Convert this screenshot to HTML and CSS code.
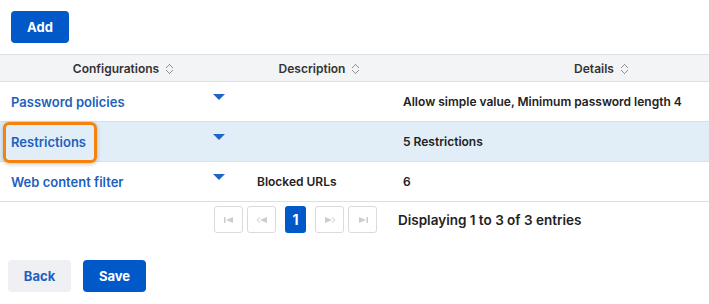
FILE: index.html
```html
<!DOCTYPE html>
<html lang="en">
  <head>
    <meta charset="UTF-8" />
    <title>Configurations</title>
    <link rel="stylesheet" href="styles.css">
  </head>
  <body>
    <div class="toolbar">
      <button class="btn btn-primary">Add</button>
    </div>

    <div class="table-wrap">
      <table class="grid">
        <colgroup>
          <col class="col-config" />
          <col class="col-desc" />
          <col class="col-details" />
        </colgroup>
        <thead>
          <tr>
            <th>Configurations <span class="sort"></span></th>
            <th>Description <span class="sort"></span></th>
            <th>Details <span class="sort"></span></th>
          </tr>
        </thead>
        <tbody>
          <tr>
            <td class="name"><a href="#">Password policies</a><span class="caret"></span></td>
            <td></td>
            <td>Allow simple value, Minimum password length 4</td>
          </tr>
          <tr class="selected">
            <td class="name">
              <a href="#">Restrictions</a><span class="caret"></span>
              <span class="highlight"></span>
            </td>
            <td></td>
            <td>5 Restrictions</td>
          </tr>
          <tr>
            <td class="name"><a href="#">Web content filter</a><span class="caret"></span></td>
            <td>Blocked URLs</td>
            <td>6</td>
          </tr>
        </tbody>
      </table>
    </div>

    <div class="pager">
      <div class="pages">
        <span class="page-btn">
          <svg width="10" height="6" viewBox="0 0 10 6"><rect x="0" y="0" width="1.5" height="6" fill="#c9ccd1"/><polygon points="2,3 9,0 9,6" fill="#c9ccd1"/></svg>
        </span>
        <span class="page-btn">
          <svg width="12" height="6" viewBox="0 0 12 6"><polyline points="4,0.5 1,3 4,5.5" fill="none" stroke="#c9ccd1" stroke-width="1"/><polygon points="4,3 11,0 11,6" fill="#c9ccd1"/></svg>
        </span>
        <span class="page-btn active">1</span>
        <span class="page-btn">
          <svg width="12" height="6" viewBox="0 0 12 6"><polygon points="1,0 8,3 1,6" fill="#c9ccd1"/><polyline points="8,0.5 11,3 8,5.5" fill="none" stroke="#c9ccd1" stroke-width="1"/></svg>
        </span>
        <span class="page-btn">
          <svg width="10" height="6" viewBox="0 0 10 6"><polygon points="1,0 8,3 1,6" fill="#c9ccd1"/><rect x="8.5" y="0" width="1.5" height="6" fill="#c9ccd1"/></svg>
        </span>
      </div>
      <div class="pager-info">Displaying 1 to 3 of 3 entries</div>
    </div>

    <div class="actions">
      <button class="btn btn-light">Back</button>
      <button class="btn btn-primary btn-wide">Save</button>
    </div>
  </body>
</html>
```

FILE: styles.css
```css
body {
  font-family: "Inter", "Liberation Sans", sans-serif;
  margin: 0;
  background-color: #ffffff;
  color: #222;
  font-size: 12px;
}
.toolbar {
  padding: 11px 11px 0;
  height: 54px;
  box-sizing: border-box;
}
.btn {
  font-family: inherit;
  font-size: 13px;
  font-weight: 700;
  height: 32px;
  border: none;
  border-radius: 4px;
  padding: 0;
  width: 58px;
  cursor: pointer;
  display: block;
}
.btn-primary {
  background-color: #0058c9;
  color: white;
}
.btn-wide {
  width: 63px;
}
.btn-light {
  background-color: #eff0f3;
  color: #1f5fbf;
  width: 63px;
}
.table-wrap {
  overflow: hidden;
  width: 709px;
}
.grid {
  border-collapse: collapse;
  table-layout: fixed;
  width: 810px;
}
.col-config {
  width: 246px;
}
.col-desc {
  width: 146px;
}
.grid th {
  background-color: #f3f4f6;
  border-top: 1px solid #dcdfe4;
  border-bottom: 1px solid #dcdfe4;
  height: 26px;
  padding: 0;
  font-weight: 600;
  color: #333;
  text-align: center;
}
.sort {
  display: inline-block;
  width: 7px;
  height: 10px;
  margin-left: 4px;
  vertical-align: -1px;
  background:
    linear-gradient(135deg, transparent 45%, #8a8f98 46%, #8a8f98 60%, transparent 61%) 0 0 / 4px 4px no-repeat,
    linear-gradient(225deg, transparent 45%, #8a8f98 46%, #8a8f98 60%, transparent 61%) 3px 0 / 4px 4px no-repeat,
    linear-gradient(45deg, transparent 45%, #8a8f98 46%, #8a8f98 60%, transparent 61%) 0 6px / 4px 4px no-repeat,
    linear-gradient(315deg, transparent 45%, #8a8f98 46%, #8a8f98 60%, transparent 61%) 3px 6px / 4px 4px no-repeat;
}
.grid td {
  height: 39px;
  padding: 0 11px;
  border-bottom: 1px solid #dcdfe4;
  font-weight: 600;
  color: #222;
}
.grid tr.selected td {
  background-color: #e1eef8;
}
.grid td.name {
  position: relative;
  font-size: 13px;
}
.name a {
  color: #1d5fbe;
  text-decoration: none;
}
.caret {
  position: absolute;
  left: 213px;
  top: 12px;
  width: 0;
  height: 0;
  border-left: 6px solid transparent;
  border-right: 6px solid transparent;
  border-top: 6px solid #1d66c7;
}
.highlight {
  position: absolute;
  left: 3px;
  top: 0;
  width: 88px;
  height: 35px;
  border: 3px solid #f5820d;
  border-radius: 6px;
  box-shadow: 0 1px 4px rgba(0, 0, 0, 0.25);
}
.pager {
  display: flex;
  align-items: center;
  padding: 4px 0 0 214px;
  gap: 21px;
}
.pages {
  display: flex;
  gap: 4px;
}
.page-btn {
  width: 27px;
  height: 25px;
  border: 1px solid #d9dbe0;
  border-radius: 3px;
  display: flex;
  align-items: center;
  justify-content: center;
}
.page-btn.active {
  width: 21px;
  height: 27px;
  border: none;
  background-color: #0058c9;
  color: white;
  font-size: 14px;
  font-weight: 700;
  margin: 0 5px;
}
.pager-info {
  font-weight: 600;
  font-size: 13.5px;
  color: #222;
}
.actions {
  display: flex;
  gap: 12px;
  padding: 27px 8px 0;
}
```
